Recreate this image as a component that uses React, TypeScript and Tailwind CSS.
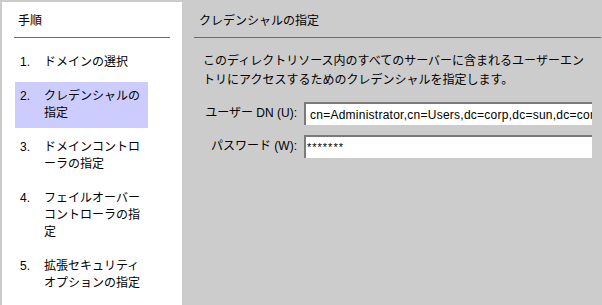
import React from "react";

const steps: { n: string; lines: string; active?: boolean }[] = [
  { n: "1.", lines: "ドメインの選択" },
  { n: "2.", lines: "クレデンシャルの指定", active: true },
  { n: "3.", lines: "ドメインコントローラの指定" },
  { n: "4.", lines: "フェイルオーバーコントローラの指定" },
  { n: "5.", lines: "拡張セキュリティオプションの指定" },
];

export default function App() {
  return (
    <div
      className="w-[602px] h-[305px] bg-[#cccccc] flex pt-[2px] pl-[2px] overflow-hidden text-[12px] text-black"
      style={{ fontFamily: '"Liberation Sans", "Noto Sans CJK JP", sans-serif' }}
    >
      {/* Left steps panel */}
      <div className="w-[180px] bg-white flex flex-col shrink-0">
        <div className="pt-[11px] pb-[7px] pl-[16px] leading-[17px]">手順</div>
        <div className="mx-[12px] h-[1px] bg-[#666699]" />
        <div className="mt-[10px] flex flex-col gap-[5px]">
          {steps.map((s) => (
            <div
              key={s.n}
              className={`ml-[13px] w-[133px] flex py-[6px] pl-[5px] leading-[17px] ${
                s.active ? "bg-[#ccccff]" : ""
              }`}
            >
              <div className="w-[24px] shrink-0">{s.n}</div>
              <div className="w-[100px] break-all">{s.lines}</div>
            </div>
          ))}
        </div>
      </div>

      {/* Right content */}
      <div className="flex-1 flex flex-col">
        <div className="pt-[11px] pb-[7px] pl-[17px] leading-[17px]">クレデンシャルの指定</div>
        <div className="ml-[12px] mr-[1px] h-[1px] bg-[#666699]" />
        <div className="pl-[21px] pr-[10px] mt-[14px]">
          <p className="leading-[19px] w-[388px] break-all">
            このディレクトリソース内のすべてのサーバーに含まれるユーザーエントリにアクセスするためのクレデンシャルを指定します。
          </p>
          <div className="mt-[12px] flex flex-col gap-[10px]">
            <div className="flex items-center h-[23px]">
              <div className="w-[94px] text-right pb-[2px] whitespace-nowrap">ユーザー DN (U):</div>
              <div className="ml-[7px] w-[288px] h-[23px] bg-white border-t-2 border-l-2 border-t-[#7a7a7a] border-l-[#7a7a7a] overflow-hidden whitespace-nowrap flex items-center pl-[4px] pr-[4px] text-[12px] tracking-[0.25px]">
                cn=Administrator,cn=Users,dc=corp,dc=sun,dc=com
              </div>
            </div>
            <div className="flex items-center h-[23px]">
              <div className="w-[94px] text-right pb-[2px] whitespace-nowrap">パスワード (W):</div>
              <div className="ml-[7px] w-[288px] h-[23px] bg-white border-t-2 border-l-2 border-t-[#7a7a7a] border-l-[#7a7a7a] overflow-hidden whitespace-nowrap flex items-start pt-[2px] pl-[1px] text-[11px] tracking-[1px]">
                *******
              </div>
            </div>
          </div>
        </div>
      </div>
    </div>
  );
}
